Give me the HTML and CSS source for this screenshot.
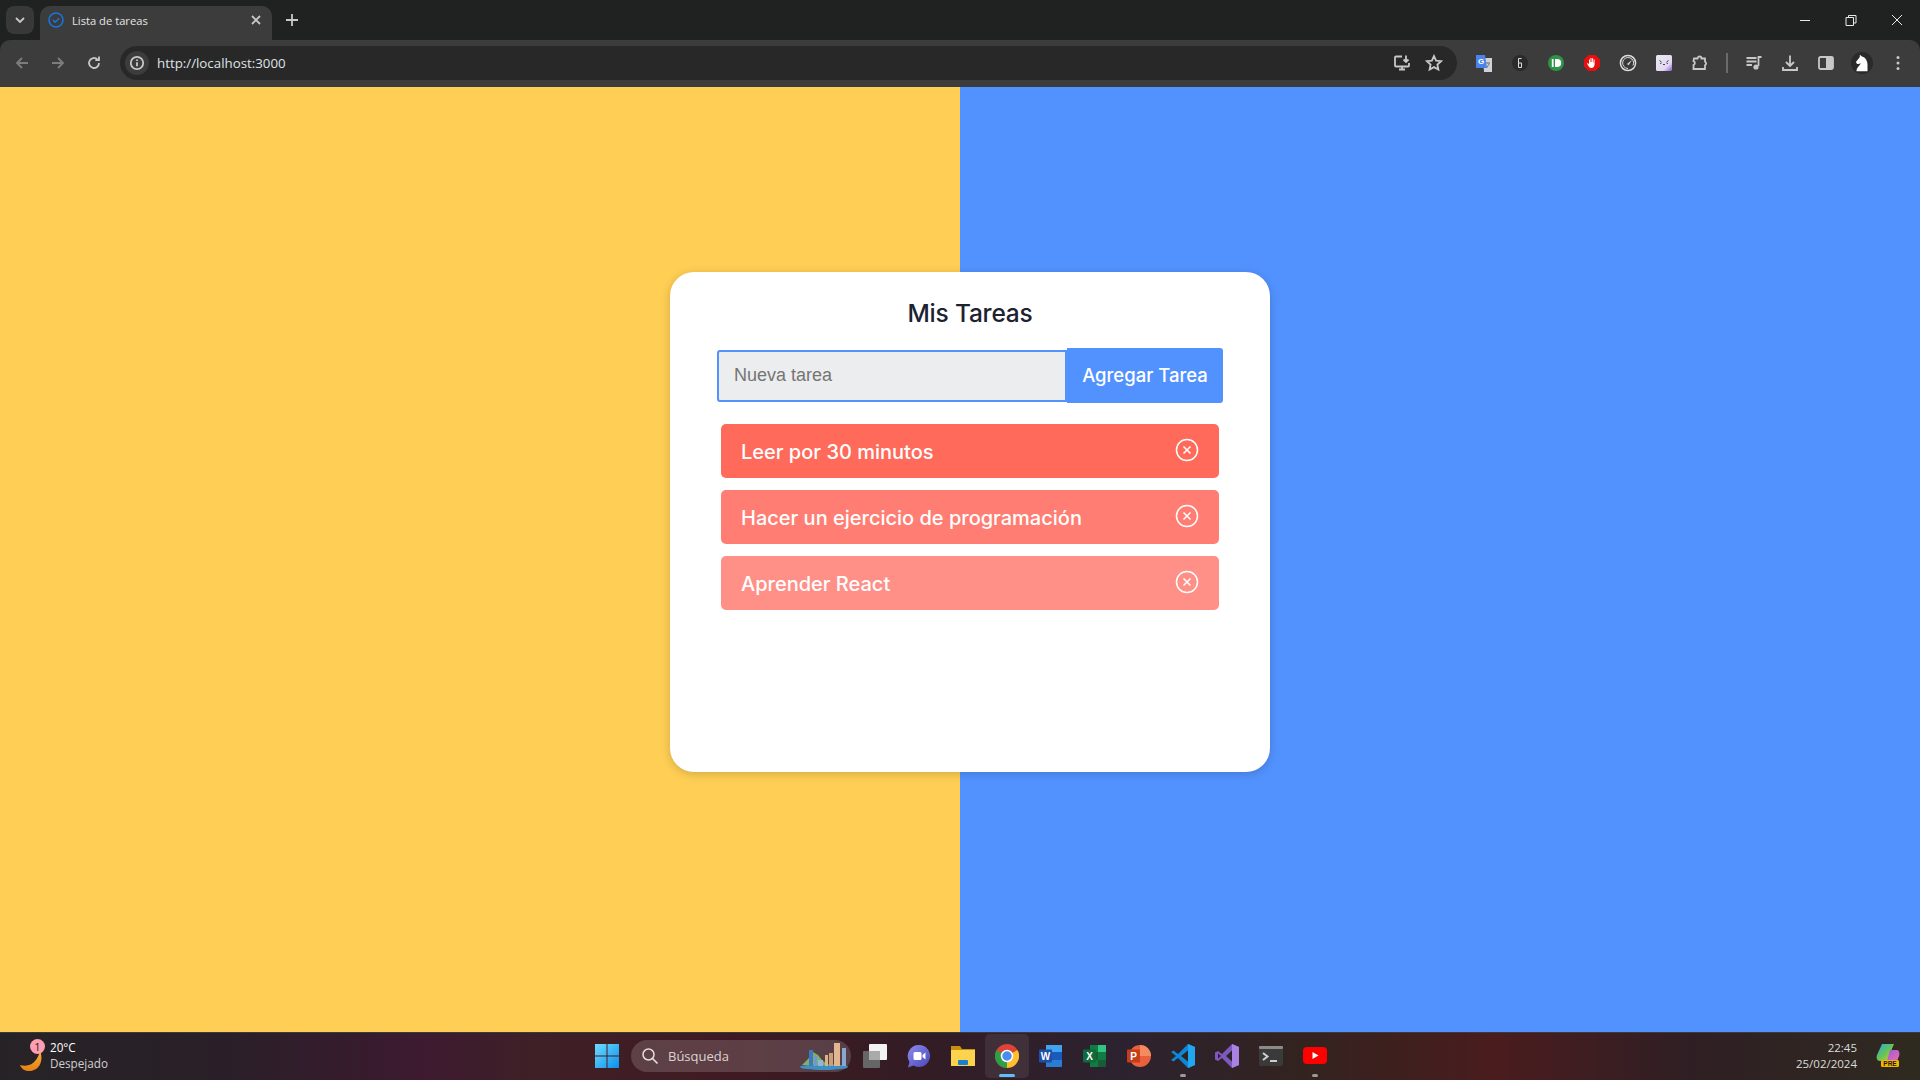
FILE: index.html
```html
<!DOCTYPE html>
<html lang="es">
<head>
<meta charset="utf-8">
<title>Lista de tareas</title>
<link rel="stylesheet" href="styles.css">
</head>
<body>
<div class="screen">
  <header class="tabstrip">
    <button class="tab-search"><svg width="12" height="12" viewBox="0 0 12 12"><path d="M2 4l4 4 4-4" class="st2"/></svg></button>
    <div class="tab">
      <svg class="favicon" width="16" height="16" viewBox="0 0 16 16"><circle cx="8" cy="8" r="7" fill="none" stroke="#1a73d8" stroke-width="1.6"/><path d="M5 8.2l2.2 2 4-4" fill="none" stroke="#1a73d8" stroke-width="1.6"/></svg>
      <span class="tab-title">Lista de tareas</span>
      <svg width="12" height="12" viewBox="0 0 12 12"><path d="M2 2l8 8M10 2l-8 8" class="st2"/></svg>
    </div>
    <svg class="newtab" width="14" height="14" viewBox="0 0 14 14"><path d="M7 1v12M1 7h12" class="st2"/></svg>
    <div class="winctl">
      <svg width="46" height="12" viewBox="0 0 46 12"><path d="M18 6.5h10" class="st1"/></svg>
      <svg width="46" height="12" viewBox="0 0 46 12"><path d="M18 3.5h7.5v8H18zM20.5 3.5V1.5h7.5v7.5h-2.5" class="st1"/></svg>
      <svg width="46" height="12" viewBox="0 0 46 12"><path d="M18 1l10 10M28 1L18 11" class="st1"/></svg>
    </div>
  </header>

  <nav class="toolbar">
    <div class="navbtns">
      <svg class="navbtn" width="16" height="16" viewBox="0 0 16 16"><path d="M14 8H3M8 3L3 8l5 5" class="dim"/></svg>
      <svg class="navbtn" width="16" height="16" viewBox="0 0 16 16"><path d="M2 8h11M8 3l5 5-5 5" class="dim"/></svg>
      <svg class="navbtn" width="16" height="16" viewBox="0 0 16 16"><path d="M13 8a5 5 0 1 1-1.600-3.700M13 1.500v3.700H9.300" class="st2"/></svg>
    </div>
    <div class="omnibox">
      <span class="chip"><svg width="16" height="16" viewBox="0 0 16 16"><circle cx="8" cy="8" r="6.2" class="st2" stroke-width="1.5"/><path d="M8 7.2v4M8 4.5v1.4" class="st2" stroke-width="1.5"/></svg></span>
      <span class="url">http://localhost:3000</span>
      <span class="omni-actions">
        <svg width="18" height="18" viewBox="0 0 18 18"><path d="M9 2.500H3a1 1 0 0 0-1 1v8a1 1 0 0 0 1 1h12a1 1 0 0 0 1-1V9M6 15.500h6M9 12.500v3M13 1.500v6M10.500 5.500L13 8l2.500-2.500" class="st2"/></svg>
        <svg width="18" height="18" viewBox="0 0 18 18"><path d="M9 2l2.100 4.600 5 .6-3.700 3.400 1 5L9 13.100l-4.400 2.500 1-5L1.900 7.200l5-.6z" class="st2"/></svg>
      </span>
    </div>
    <div class="exts">
      <span class="ext"><svg width="18" height="18" viewBox="0 0 18 18"><path d="M8 4h9v14H9z" fill="#cfd2d6"/><path d="M11 9h4M13 8.500v1M11.500 14l3-4.500" stroke="#777" fill="none"/><path d="M1 1h9l2 13H1z" fill="#4a84ea"/><text x="3" y="10" class="gt">G</text></svg></span>
      <span class="ext"><svg width="18" height="18" viewBox="0 0 18 18"><circle cx="9" cy="9" r="8" fill="#2b2b2b"/><path d="M10.500 4.500H7.500v9h3v-4.500h-3" fill="none" stroke="#ddd"/></svg></span>
      <span class="ext"><svg width="18" height="18" viewBox="0 0 18 18"><circle cx="9" cy="9" r="8" fill="#2e9447"/><path d="M4.800 5h1.800v8H4.800zM8 5h2.200a4 4 0 0 1 0 8H8z" fill="#fff"/></svg></span>
      <span class="ext"><svg width="18" height="18" viewBox="0 0 18 18"><path d="M5.500 1h7L17 5.500v7L12.500 17h-7L1 12.500v-7z" fill="#e80f0f"/><path d="M6 8V5.500h1V8h.5V4h1v4h.6V4.200h1V8.500h.5V5.500h1V10c0 2.500-1.300 4-3.300 4-1.400 0-2.200-.8-3-2.200L4 9.500l.8-.5L6 10.200z" fill="#fff"/></svg></span>
      <span class="ext"><svg width="18" height="18" viewBox="0 0 18 18"><circle cx="9" cy="9" r="7.600" fill="#3a3a3a" stroke="#ddd" stroke-width="1.500"/><path d="M9 14.500a5.500 5.500 0 1 1 5-3" fill="none" stroke="#ddd"/><path d="M8 10l5-4-3.500 5.300z" fill="#ddd"/></svg></span>
      <span class="ext"><svg width="18" height="18" viewBox="0 0 18 18"><defs><linearGradient id="ml" x1="0" y1="0" x2="1" y2="1"><stop offset="0" stop-color="#e9e9ee"/><stop offset=".7" stop-color="#e2d8f2"/><stop offset="1" stop-color="#8a5ad0"/></linearGradient></defs><rect x="1" y="1" width="16" height="16" rx="1.500" fill="url(#ml)"/><path d="M4.500 6.500l2 1.500M13.500 6.500l-2 1.500M8 10l1 1 1-1M5 9.500l1.500-.5M13 9.500l-1.500-.5" stroke="#444" fill="none"/></svg></span>
      <span class="ext"><svg width="18" height="18" viewBox="0 0 18 18"><path d="M3 4.500h3.500a2 2 0 0 1 4 0H14v3.200a2 2 0 0 1 0 3.600v3.700H2.500V11a2 2 0 0 0 0-3.800z" class="st2" stroke-width="1.500"/></svg></span>
      <span class="sep"></span>
      <span class="ext"><svg width="18" height="18" viewBox="0 0 18 18"><path d="M1.500 4h10M1.500 7.500h10M1.500 11H7M13.500 12V3h3" class="st2" stroke-width="1.500"/><circle cx="11" cy="13" r="2.600" fill="#c8c8c8"/></svg></span>
      <span class="ext"><svg width="18" height="18" viewBox="0 0 18 18"><path d="M9 1.500v10M5 8l4 4 4-4M2 13v3h14v-3" class="st2" stroke-width="1.700"/></svg></span>
      <span class="ext"><svg width="18" height="18" viewBox="0 0 18 18"><rect x="2" y="3" width="14" height="12" rx="1.500" class="st2" stroke-width="1.500"/><rect x="9" y="3" width="7" height="12" fill="#c8c8c8"/></svg></span>
      <span class="ext"><svg width="22" height="22" viewBox="0 0 20 20"><circle cx="10" cy="10" r="10" fill="#2a2a2a"/><path d="M5 17.500c0-3.500 2.800-4.500 3.800-7.500-1 .9-2.200 1.100-3.300.8L4.500 9 8 4.500V2.500l2 1.500c3.200.8 5 4 5 7.500v6z" fill="#fff"/></svg></span>
      <span class="ext"><svg width="18" height="18" viewBox="0 0 18 18"><circle cx="9" cy="3.500" r="1.500" fill="#c8c8c8"/><circle cx="9" cy="9" r="1.500" fill="#c8c8c8"/><circle cx="9" cy="14.500" r="1.500" fill="#c8c8c8"/></svg></span>
    </div>
  </nav>

  <main class="page">
    <section class="card">
      <h1 class="card-title">Mis Tareas</h1>
      <form class="task-form">
        <input class="task-input" type="text" placeholder="Nueva tarea">
        <button class="task-add" type="button">Agregar Tarea</button>
      </form>
      <ul class="task-list">
        <li class="task task-1"><span>Leer por 30 minutos</span><svg class="task-x" width="24" height="24" viewBox="0 0 24 24"><circle cx="12" cy="12" r="10.500"/><path d="M8.500 8.500l7 7M15.500 8.500l-7 7"/></svg></li>
        <li class="task task-2"><span>Hacer un ejercicio de programación</span><svg class="task-x" width="24" height="24" viewBox="0 0 24 24"><circle cx="12" cy="12" r="10.500"/><path d="M8.500 8.500l7 7M15.500 8.500l-7 7"/></svg></li>
        <li class="task task-3"><span>Aprender React</span><svg class="task-x" width="24" height="24" viewBox="0 0 24 24"><circle cx="12" cy="12" r="10.500"/><path d="M8.500 8.500l7 7M15.500 8.500l-7 7"/></svg></li>
      </ul>
    </section>
  </main>

  <footer class="taskbar">
    <div class="tb-left">
      <span class="weather-icon">
        <svg width="26" height="28" viewBox="0 0 26 28"><defs><linearGradient id="moon" x1="0" y1="0" x2="0" y2="1"><stop offset="0" stop-color="#f6b13c"/><stop offset="1" stop-color="#e57f12"/></linearGradient></defs><path d="M20 6c3 6 2 18-9 20C6 26.500 2 25 0 20c6 2 16 1 20-14z" fill="url(#moon)"/></svg>
        <span class="badge">1</span>
      </span>
      <div class="weather-text"><span class="w-temp">20°C</span><span class="w-desc">Despejado</span></div>
    </div>
    <div class="tb-center">
      <span class="tb-icon"><svg width="24" height="24" viewBox="0 0 24 24"><defs><linearGradient id="win" x1="0" y1="0" x2="1" y2="1"><stop offset="0" stop-color="#6fdcff"/><stop offset="1" stop-color="#0a8fe8"/></linearGradient></defs><path d="M0 0h11.500v11.500H0zM12.500 0H24v11.500H12.500zM0 12.500h11.500V24H0zM12.500 12.500H24V24H12.500z" fill="url(#win)"/></svg></span>
      <div class="search">
        <svg width="18" height="18" viewBox="0 0 18 18"><circle cx="7.500" cy="7.500" r="5.500" fill="none" stroke="#e6dcdc" stroke-width="1.500"/><path d="M11.500 11.500l5 5" stroke="#e6dcdc" stroke-width="1.700"/></svg>
        <span class="search-text">Búsqueda</span>
        <svg class="city" width="50" height="32" viewBox="0 0 50 32"><ellipse cx="24" cy="27" rx="24" ry="3" fill="#3f8fc4"/><path d="M2 25l6-6 5-7 5 3 4 5 6 5z" fill="#7fb06a"/><rect x="9" y="10" width="4" height="16" fill="#3f78bb"/><rect x="14" y="16" width="3" height="10" fill="#6d9bd0"/><rect x="18" y="20" width="5" height="6" fill="#8fb7d8"/><rect x="25" y="15" width="3" height="11" fill="#d7b48c"/><rect x="29" y="13" width="4" height="13" fill="#c9a077"/><rect x="34" y="3" width="6" height="23" fill="#e2b78f"/><rect x="42" y="8" width="4" height="18" fill="#8aa7d4"/></svg>
      </div>
      <span class="tb-icon"><svg width="24" height="24" viewBox="0 0 24 24"><rect x="0" y="7" width="17" height="17" rx="1" fill="#666"/><rect x="6" y="0" width="18" height="16" rx="1" fill="#f2f2f2"/><rect x="6" y="7" width="11" height="9" fill="#aaa"/></svg></span>
      <span class="tb-icon"><svg width="24" height="24" viewBox="0 0 24 24"><defs><linearGradient id="mt" x1="0" y1="0" x2="1" y2="1"><stop offset="0" stop-color="#8d8cf0"/><stop offset="1" stop-color="#4a45b8"/></linearGradient></defs><path d="M12 1a11 11 0 1 1-5.500 20.500L1 23.500l1.500-5.500A11 11 0 0 1 12 1z" fill="url(#mt)"/><rect x="6.500" y="8" width="8" height="8" rx="1.500" fill="#fff"/><path d="M15.500 11l3-2.500v7l-3-2.500z" fill="#fff"/></svg></span>
      <span class="tb-icon"><svg width="24" height="24" viewBox="0 0 24 24"><path d="M0 2h9l2 3h13v4H0z" fill="#c98f10"/><path d="M0 6h24v16H0z" fill="#fcd34d"/><rect x="7" y="16" width="10" height="5" rx="1" fill="#1a7fd0"/></svg></span>
      <span class="tb-icon tb-active"><svg width="24" height="24" viewBox="0 0 24 24"><circle cx="12" cy="12" r="12" fill="#dd4437"/><path d="M12 12L22.400 6A12 12 0 0 1 12 24z" fill="#fbc02d"/><path d="M12 12L12 24A12 12 0 0 1 1.600 6z" fill="#2f9e44"/><circle cx="12" cy="12" r="5.500" fill="#4a8cf0" stroke="#fff" stroke-width="1.500"/></svg><i class="dot dot-on"></i></span>
      <span class="tb-icon"><svg width="24" height="24" viewBox="0 0 24 24"><path d="M7 1h15a1 1 0 0 1 1 1v20a1 1 0 0 1-1 1H7z" fill="#2b7cd3"/><path d="M7 8h16v8H7z" fill="#185abd"/><path d="M7 1h16v7H7z" fill="#41a5ee"/><rect x="0" y="5.500" width="13" height="13" rx="1" fill="#1d4fa8"/><text x="6.500" y="15.500" class="appl">W</text></svg></span>
      <span class="tb-icon"><svg width="24" height="24" viewBox="0 0 24 24"><path d="M7 1h16v22H7z" fill="#107c41"/><path d="M15 1h8v7h-8z" fill="#33c481"/><path d="M7 8h8v8H7z" fill="#185c37"/><path d="M15 16h8v7h-8z" fill="#185c37"/><rect x="0" y="5.500" width="13" height="13" rx="1" fill="#0f6b3a"/><text x="6.500" y="15.500" class="appl">X</text></svg></span>
      <span class="tb-icon"><svg width="24" height="24" viewBox="0 0 24 24"><circle cx="13" cy="12" r="11" fill="#e8603c"/><path d="M13 1a11 11 0 0 1 11 11H13z" fill="#f28b5f"/><rect x="0" y="5.500" width="13" height="13" rx="1" fill="#c43e1c"/><text x="6.500" y="15.500" class="appl">P</text></svg></span>
      <span class="tb-icon"><svg width="24" height="24" viewBox="0 0 24 24"><path d="M17 0l7 3v18l-7 3L7 14l-4.500 3.500L0 16l5-4-5-4 2.500-1.500L7 10z" fill="#0f85d6"/><path d="M17 6.500L10 12l7 5.500z" fill="#2a2422"/><path d="M17 0l7 3v18l-7 3z" fill="#23a6f0"/></svg><i class="dot"></i></span>
      <span class="tb-icon"><svg width="24" height="24" viewBox="0 0 24 24"><path d="M17 0l7 3v18l-7 3L7 14l-4 3-3-1.500V8.500L3 7l4 3z" fill="#7e57c2"/><path d="M17 6.500L11 12l6 5.500z" fill="#2a2422"/><path d="M3 9.500v5L6 12z" fill="#2a2422"/><path d="M17 0l7 3v18l-7 3z" fill="#a884e0"/></svg></span>
      <span class="tb-icon"><svg width="24" height="20" viewBox="0 0 24 20"><rect width="24" height="20" rx="2" fill="#3a3a3a"/><rect width="24" height="3" rx="1" fill="#8a8a8a"/><path d="M4 7l4.500 3.500L4 14" fill="none" stroke="#cfcfcf" stroke-width="2"/><path d="M11 15h7" stroke="#fff" stroke-width="1.500"/></svg></span>
      <span class="tb-icon"><svg width="24" height="17" viewBox="0 0 24 17"><rect width="24" height="17" rx="4" fill="#f00"/><path d="M9.500 5l6 3.500-6 3.500z" fill="#fff"/></svg><i class="dot"></i></span>
    </div>
    <div class="tb-right">
      <div class="clock"><span>22:45</span><span>25/02/2024</span></div>
      <span class="copilot"><svg width="24" height="26" viewBox="0 0 24 26"><defs><linearGradient id="c1" x1="0" y1="0" x2="1" y2="1"><stop offset="0" stop-color="#2aa4f4"/><stop offset=".5" stop-color="#62c554"/><stop offset="1" stop-color="#e8c72e"/></linearGradient><linearGradient id="c2" x1="0" y1="0" x2="1" y2="1"><stop offset="0" stop-color="#9a5ce0"/><stop offset="1" stop-color="#f06aa8"/></linearGradient></defs><path d="M6 1h12l-3 7-3 10H4C1 18 0 15 1 12z" fill="url(#c1)"/><path d="M14 7h7c2 0 3 3 2 6l-2 5H11z" fill="url(#c2)"/><rect x="5" y="17" width="18" height="7" rx="1.500" fill="#f4b400"/><text x="14" y="23" class="pre">PRE</text></svg></span>
    </div>
  </footer>
</div>
</body>
</html>
```

FILE: styles.css
```css
* { box-sizing: border-box; }
html, body { margin: 0; height: 100%; overflow: hidden; background: #202222; }
body { font-family: "Open Sans", "Noto Sans", sans-serif; color: #e8e8e8; }
.screen { display: flex; flex-direction: column; height: 1080px; width: 1920px; }

.st1 { fill: none; stroke: #e8e8e8; stroke-width: 1; }
.st2 { fill: none; stroke: #c8c8c8; stroke-width: 1.800; }
.dim { fill: none; stroke: #7d7d7d; stroke-width: 1.800; }

/* tab strip */
.tabstrip { height: 40px; background: #202222; display: flex; align-items: flex-end; padding-left: 6px; flex: none; }
.tab-search { width: 28px; height: 28px; margin-bottom: 6px; border: 0; border-radius: 8px; background: #383838; display: flex; align-items: center; justify-content: center; padding: 0; }
.tab { width: 232px; height: 34px; margin-left: 6px; background: #3c3c3c; border-radius: 10px 10px 0 0; display: flex; align-items: center; padding: 0 10px 6px 8px; gap: 8px; }
.favicon { flex: none; }
.tab-title { flex: 1; font-size: 11.200px; color: #e6e6e6; }
.newtab { margin: 0 0 13px 13px; }
.winctl { margin-left: auto; display: flex; align-items: center; height: 40px; }

/* toolbar */
.toolbar { height: 47px; background: #3c3c3c; border-radius: 10px 10px 0 0; display: flex; align-items: center; flex: none; padding: 0 0 2px 4px; }
.navbtns { display: flex; width: 116px; padding-left: 10px; gap: 20px; flex: none; }
.navbtn { flex: none; }
.omnibox { width: 1337px; height: 34px; background: #282828; border-radius: 17px; display: flex; align-items: center; padding: 0 14px 0 5px; flex: none; }
.chip { width: 24px; height: 24px; border-radius: 50%; background: #3c3c3c; display: flex; align-items: center; justify-content: center; flex: none; }
.url { margin-left: 8px; font-size: 13.300px; color: #dfe3e6; flex: 1; }
.omni-actions { display: flex; gap: 14px; }
.exts { display: flex; align-items: center; margin-left: 9px; }
.ext { width: 36px; display: flex; justify-content: center; align-items: center; height: 24px; flex: none; }
.sep { width: 2px; height: 20px; background: #6a6a6a; margin: 0 8px; flex: none; }
.gt { font: 700 8px "Liberation Sans", sans-serif; fill: #fff; }

/* page */
.page { flex: 1; min-height: 0; background: linear-gradient(90deg, #ffce54 50%, #5292ff 50%); padding: 185px 0 0 20px; display: flex; justify-content: center; align-items: flex-start; }
.card { width: 600px; height: 500px; background: #fff; border-radius: 24px; box-shadow: 0 2px 10px rgba(0, 0, 0, .18); padding: 21px 47px 0; }
.card-title { margin: 0 0 15px; text-align: center; font: 500 24.500px/40px "Inter", sans-serif; color: #1c2230; letter-spacing: -.2px; }
.task-form { display: flex; align-items: center; }
.task-input { width: 350px; height: 52px; border: 2px solid #5292ff; border-radius: 3px 0 0 3px; background: #ecedee; padding: 0 15px; font: 18px "Liberation Sans", sans-serif; color: #333; outline: 0; flex: none; }
.task-input::placeholder { color: #757575; opacity: 1; }
.task-add { width: 156px; height: 55px; border: 0; border-radius: 0 3px 3px 0; background: #5292ff; color: #fff; font: 500 18.500px "Inter", sans-serif; padding: 0 0 1px; flex: none; }
.task-list { list-style: none; margin: 21px 4px 0; padding: 0; display: flex; flex-direction: column; gap: 12px; }
.task { height: 54px; border-radius: 5px; display: flex; align-items: center; justify-content: space-between; padding: 2px 20px 0; color: #fff; font: 500 20px "Inter", sans-serif; }
.task-1 { background: #ff6a5b; }
.task-2 { background: #ff7d72; }
.task-3 { background: #ff9088; }
.task-x { fill: none; stroke: #fff; stroke-width: 1.500; margin-top: -4px; flex: none; }

/* taskbar */
.taskbar { height: 48px; flex: none; display: grid; grid-template-columns: 1fr auto 1fr; align-items: center; padding-bottom: 2px; background: linear-gradient(90deg, #262326 0, #2a1f28 12%, #3d1a30 22%, #3f2026 28%, #401a22 38%, #331c24 48%, #2c2230 58%, #33231f 68%, #4a1c1e 78%, #2f1f24 88%, #2f2a20 100%); border-top: 1px solid #3c3a3c; }
.tb-left { display: flex; align-items: center; padding-left: 20px; gap: 6px; }
.weather-icon { position: relative; width: 24px; height: 30px; display: block; }
.weather-icon svg { display: block; margin-top: 4px; }
.badge { position: absolute; left: 10px; top: -2px; width: 15px; height: 15px; border-radius: 50%; background: #ff9eb0; color: #222; font-size: 11px; line-height: 15px; text-align: center; }
.weather-text { display: flex; flex-direction: column; font-size: 11.700px; line-height: 16px; margin-top: -1px; }
.w-temp { color: #fff; font-weight: 500; }
.w-desc { color: #cfcfcf; }
.tb-center { display: flex; align-items: center; margin-left: 2px; }
.tb-icon { width: 44px; height: 44px; display: flex; align-items: center; justify-content: center; position: relative; flex: none; }
.tb-active { background: rgba(255, 255, 255, .08); border-radius: 5px; }
.dot { position: absolute; bottom: 1px; left: 50%; width: 6px; height: 3px; margin-left: -3px; background: #9a9a9a; border-radius: 2px; }
.dot-on { width: 16px; margin-left: -8px; background: #5fc0f5; }
.appl { font: 700 10px "Liberation Sans", sans-serif; fill: #fff; text-anchor: middle; }
.pre { font: 700 6.500px "Liberation Sans", sans-serif; fill: #1a1a1a; text-anchor: middle; }
.search { width: 220px; height: 32px; margin: 0 2px; border-radius: 16px; background: rgba(255, 255, 255, .16); display: flex; align-items: center; padding-left: 10px; gap: 9px; position: relative; }
.search-text { font-size: 13px; color: #dcd4d4; }
.city { position: absolute; right: 1px; bottom: 0; }
.tb-right { display: flex; justify-content: flex-end; align-items: center; padding-right: 20px; gap: 19px; }
.clock { display: flex; flex-direction: column; align-items: flex-end; font-size: 11.500px; line-height: 16px; color: #dcdcdc; }
.copilot { display: block; height: 26px; }
```
